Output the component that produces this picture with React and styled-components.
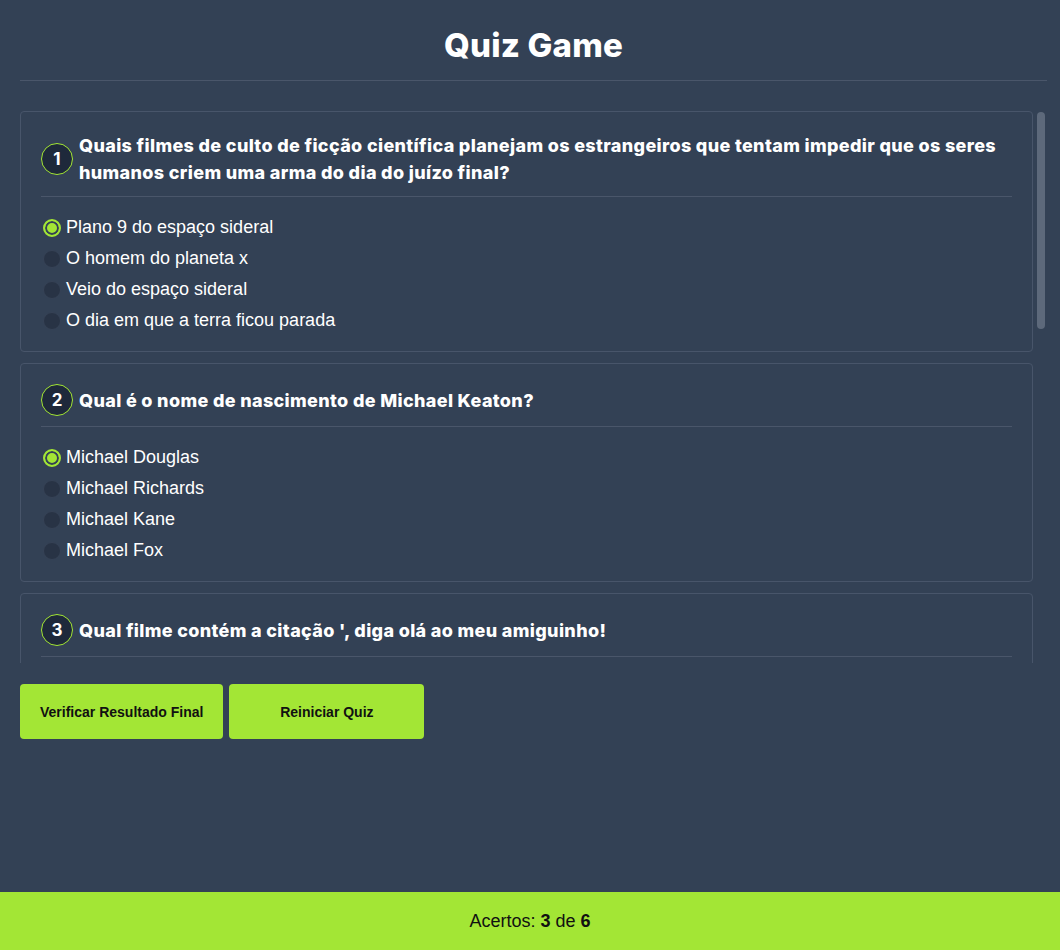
import React, { useState, useRef, useLayoutEffect } from 'react'
import styled, { createGlobalStyle } from 'styled-components'

const GlobalStyle = createGlobalStyle`
  body {
    margin: 0;
    background: #334155;
    font-family: "Liberation Sans", Arial, sans-serif;
    color: #fff;
  }
`

const questions = [
  {
    text: 'Quais filmes de culto de ficção científica planejam os estrangeiros que tentam impedir que os seres humanos criem uma arma do dia do juízo final?',
    options: ['Plano 9 do espaço sideral', 'O homem do planeta x', 'Veio do espaço sideral', 'O dia em que a terra ficou parada'],
  },
  {
    text: 'Qual é o nome de nascimento de Michael Keaton?',
    options: ['Michael Douglas', 'Michael Richards', 'Michael Kane', 'Michael Fox'],
  },
  {
    text: "Qual filme contém a citação ', diga olá ao meu amiguinho!",
    options: ['Scarface', 'O poderoso chefão', 'Os bons companheiros', 'Cassino'],
  },
  {
    text: 'Quem dirigiu o filme Tubarão, lançado em 1975?',
    options: ['Steven Spielberg', 'George Lucas', 'Martin Scorsese', 'Francis Ford Coppola'],
  },
  {
    text: 'Em que ano foi lançado o primeiro filme de Star Wars?',
    options: ['1977', '1980', '1975', '1983'],
  },
  {
    text: 'Qual ator interpretou o personagem Forrest Gump?',
    options: ['Tom Hanks', 'Robin Williams', 'Kevin Costner', 'Bill Murray'],
  },
]

const Page = styled.div`
  display: flex;
  flex-direction: column;
  min-height: 100vh;
`

const Main = styled.div`
  flex: 1;
  padding: 0 13px 0 20px;
`

const Header = styled.header`
  padding-top: 21px;
  padding-bottom: 11px;
  border-bottom: 1px solid #4a566a;
  margin-bottom: 30px;
`

const Title = styled.h1`
  margin: 0;
  text-align: center;
  font-family: Inter, "Noto Sans", sans-serif;
  font-weight: 800;
  font-size: 33px;
  line-height: 48px;
  letter-spacing: 0.2px;
  color: #fff;
`

const ScrollArea = styled.div`
  position: relative;
`

const Scroller = styled.div`
  height: 552px;
  overflow-y: scroll;
  display: flex;
  flex-direction: column;
  gap: 11px;
  padding-right: 14px;
  scrollbar-width: none;

  &::-webkit-scrollbar {
    display: none;
  }
`

const Thumb = styled.div`
  position: absolute;
  right: 2px;
  width: 8px;
  border-radius: 4px;
  background: #5d697b;
`

const Card = styled.div`
  flex: none;
  border: 1px solid #48556a;
  border-radius: 4px;
  padding: 20px 20px 15px;
`

const QuestionRow = styled.div`
  display: flex;
  align-items: center;
  gap: 6px;
  padding-bottom: 10px;
  border-bottom: 1px solid #4a566a;
`

const Number = styled.span`
  flex: none;
  width: 30px;
  height: 30px;
  border-radius: 50%;
  border: 1px solid #a3e635;
  background: #1e293b;
  display: flex;
  align-items: center;
  justify-content: center;
  font-family: Inter, "Noto Sans", sans-serif;
  font-weight: 700;
  font-size: 17px;
  color: #fff;
`

const QuestionText = styled.h2`
  margin: 0;
  font-family: Inter, "Noto Sans", sans-serif;
  font-weight: 800;
  font-size: 18px;
  line-height: 27px;
  letter-spacing: 0.35px;
  color: #fff;
`

const Options = styled.div`
  margin-top: 15px;
  display: flex;
  flex-direction: column;
`

const Option = styled.label`
  display: flex;
  align-items: center;
  gap: 5px;
  height: 31px;
  font-size: 18px;
  color: #fff;
  cursor: pointer;
`

const Radio = styled.span`
  flex: none;
  width: 18px;
  height: 18px;
  margin-left: 2px;
  border-radius: 50%;
  box-sizing: border-box;
  background: ${({ checked }) => (checked ? '#a3e635' : '#283345')};
  border: ${({ checked }) => (checked ? '2px solid #a3e635' : '1px solid #364256')};
  box-shadow: ${({ checked }) => (checked ? 'inset 0 0 0 2px #334155' : 'none')};
`

const Actions = styled.div`
  display: flex;
  gap: 6px;
  margin-top: 21px;
`

const Button = styled.button`
  height: 55px;
  min-width: 195px;
  padding: 0 20px;
  border: none;
  border-radius: 4px;
  background: #a3e635;
  color: #111;
  font-family: "Liberation Sans", Arial, sans-serif;
  font-weight: 700;
  font-size: 14px;
  cursor: pointer;
`

const Footer = styled.footer`
  height: 58px;
  background: #a3e635;
  display: flex;
  align-items: center;
  justify-content: center;
  color: #111;
  font-size: 18px;
`

export default function App() {
  const [answers, setAnswers] = useState({ 0: 0, 1: 0 })
  const [thumb, setThumb] = useState({ top: 0, height: 0 })
  const scrollRef = useRef(null)

  const updateThumb = () => {
    const el = scrollRef.current
    if (!el) return
    const { scrollTop, scrollHeight, clientHeight } = el
    const height = (clientHeight * clientHeight) / scrollHeight
    const maxScroll = scrollHeight - clientHeight
    const top = maxScroll > 0 ? (scrollTop / maxScroll) * (clientHeight - height) : 0
    setThumb({ top: top + 1, height: height - 2 })
  }

  useLayoutEffect(updateThumb, [])

  return (
    <Page>
      <GlobalStyle />
      <Main>
        <Header>
          <Title>Quiz Game</Title>
        </Header>
        <ScrollArea>
          <Scroller ref={scrollRef} onScroll={updateThumb}>
            {questions.map((q, qi) => (
              <Card key={qi}>
                <QuestionRow>
                  <Number>{qi + 1}</Number>
                  <QuestionText>{q.text}</QuestionText>
                </QuestionRow>
                <Options>
                  {q.options.map((opt, oi) => (
                    <Option key={oi} onClick={() => setAnswers({ ...answers, [qi]: oi })}>
                      <Radio checked={answers[qi] === oi} />
                      {opt}
                    </Option>
                  ))}
                </Options>
              </Card>
            ))}
          </Scroller>
          <Thumb style={{ top: thumb.top, height: thumb.height }} />
        </ScrollArea>
        <Actions>
          <Button>Verificar Resultado Final</Button>
          <Button>Reiniciar Quiz</Button>
        </Actions>
      </Main>
      <Footer>
        <span>
          Acertos: <b>3</b> de <b>6</b>
        </span>
      </Footer>
    </Page>
  )
}
